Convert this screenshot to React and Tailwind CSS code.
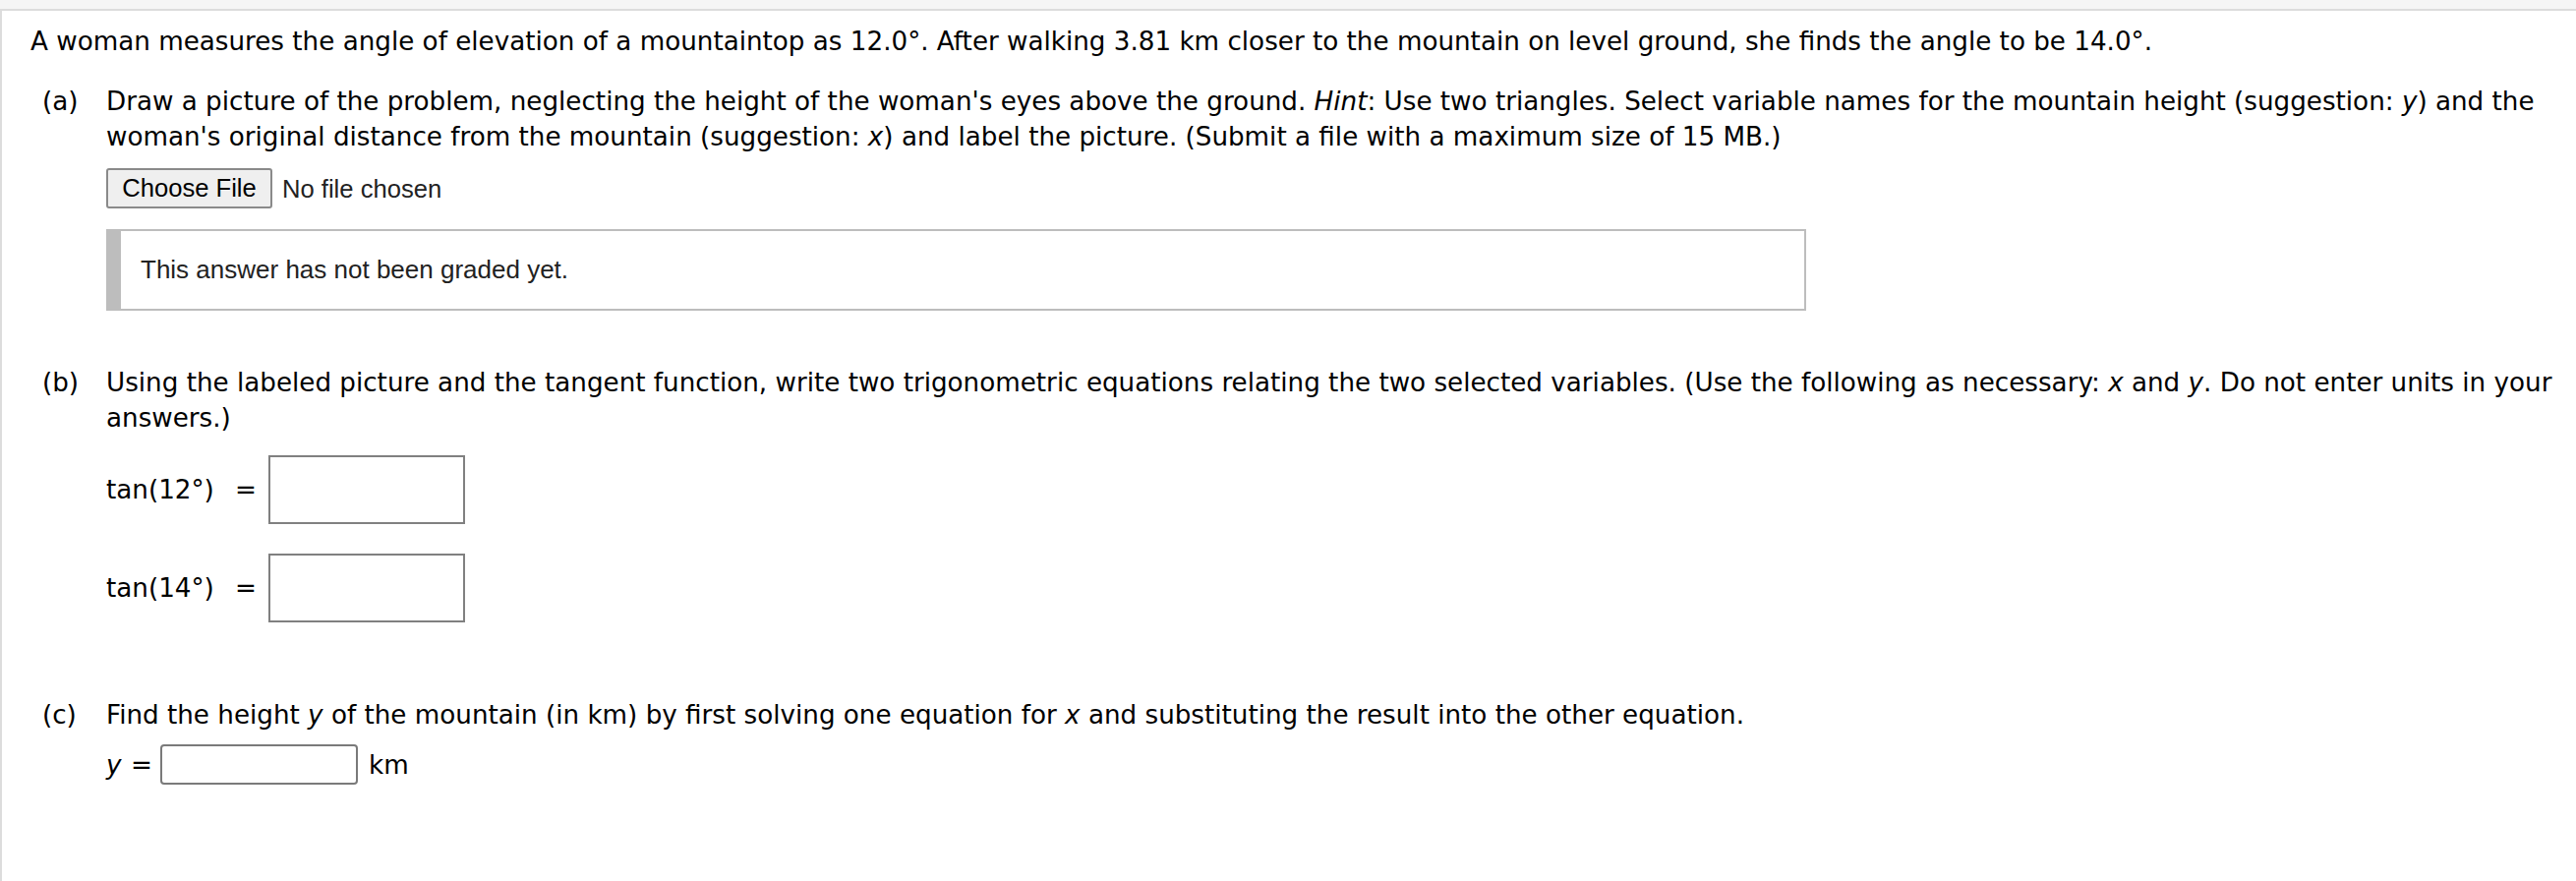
import React from "react";

const main = "font-['DejaVu_Sans',Verdana,sans-serif] text-[26.2px] leading-[36px] text-black";
const arial = "font-['Liberation_Sans',Arial,sans-serif]";

// one lettered part of the question: label on the left, content to the right
function Part({ label, children, className = "" }) {
  return (
    <div className={`flex ${className}`}>
      <div className="w-[77px] shrink-0 pl-[12px]">{label}</div>
      <div className="flex-1">{children}</div>
    </div>
  );
}

function TanRow({ angle, className = "" }) {
  return (
    <div className={`flex items-center h-[70px] ${className}`}>
      <span className="w-[131px]">tan({angle}°)</span>
      <span className="w-[34px]">=</span>
      <input type="text" className="w-[200px] h-[70px] border-2 border-[#808080] bg-white outline-none" />
    </div>
  );
}

export default function App() {
  return (
    <div className="h-[896px] w-full overflow-hidden bg-[#f5f5f5] pt-[9px]">
      <div className={`h-full bg-white border-t-2 border-l-2 border-[#dcdcdc] pt-[13px] pl-[29px] whitespace-nowrap ${main}`}>
        <p>
          A woman measures the angle of elevation of a mountaintop as 12.0°. After walking 3.81 km closer to the mountain on level ground, she finds the angle to be 14.0°.
        </p>

        {/* --- (a) --- */}
        <Part label="(a)" className="mt-[25px]">
          <p>
            Draw a picture of the problem, neglecting the height of the woman's eyes above the ground. <i>Hint</i>: Use two triangles. Select variable names for the mountain height (suggestion: <i>y</i>) and the
            <br />
            woman's original distance from the mountain (suggestion: <i>x</i>) and label the picture. (Submit a file with a maximum size of 15 MB.)
          </p>
          <div className={`mt-[14px] flex items-center ${arial}`}>
            <button className="h-[41px] w-[169px] rounded-[3px] border-2 border-[#8a8a8a] bg-[#efefef] text-[25.6px] text-black leading-none">
              Choose File
            </button>
            <span className="ml-[10px] text-[25.6px] text-[#222]">No file chosen</span>
          </div>
          <div className="mt-[21px] flex items-center h-[83px] w-[1729px] border-2 border-l-[15px] border-[#bdbdbd] bg-white">
            <span className={`pl-[20px] text-[26px] text-[#222] leading-normal ${arial}`}>
              This answer has not been graded yet.
            </span>
          </div>
        </Part>

        {/* --- (b) --- */}
        <Part label="(b)" className="mt-[55px]">
          <p>
            Using the labeled picture and the tangent function, write two trigonometric equations relating the two selected variables. (Use the following as necessary: <i>x</i> and <i>y</i>. Do not enter units in your
            <br />
            answers.)
          </p>
          <TanRow angle={12} className="mt-[20px]" />
          <TanRow angle={14} className="mt-[30px]" />
        </Part>

        {/* --- (c) --- */}
        <Part label="(c)" className="mt-[76px]">
          <p>
            Find the height <i>y</i> of the mountain (in km) by first solving one equation for <i>x</i> and substituting the result into the other equation.
          </p>
          <div className="mt-[12px] flex items-center h-[41px]">
            <i className="w-[25px]">y</i>
            <span className="w-[30px]">=</span>
            <input type="text" className="w-[201px] h-[41px] rounded-[4px] border-2 border-[#7a7a7a] bg-white outline-none" />
            <span className="ml-[11px]">km</span>
          </div>
        </Part>
      </div>
    </div>
  );
}
